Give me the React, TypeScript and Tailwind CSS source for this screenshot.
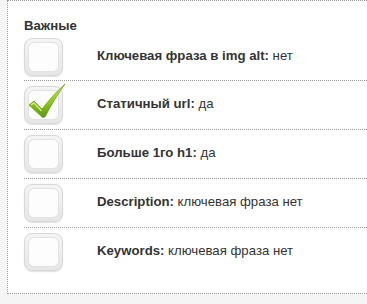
import React from "react";

const rows = [
  { label: "Ключевая фраза в img alt:", value: "нет", checked: false },
  { label: "Статичный url:", value: "да", checked: true },
  { label: "Больше 1го h1:", value: "да", checked: false },
  { label: "Description:", value: "ключевая фраза нет", checked: false },
  { label: "Keywords:", value: "ключевая фраза нет", checked: false },
];

function CheckBox({ checked }: { checked: boolean }) {
  return (
    <div className="relative h-[38px] w-[39px] shrink-0">
      <div className="h-full w-full rounded-[8px] border border-[#d8d8d8] bg-[linear-gradient(180deg,#f4f4f4,#e6e6e6)] p-[3px] shadow-[0_1px_1px_rgba(0,0,0,0.12)]">
        <div className="h-full w-full rounded-[6px] border border-[#e2e2e2] bg-[#fdfdfd]" />
      </div>
      {checked ? (
        <svg
          className="absolute left-0 top-[-4px]"
          width="44"
          height="40"
          viewBox="0 0 44 40"
        >
          <defs>
            <linearGradient id="chk" x1="0" y1="0" x2="0" y2="1">
              <stop offset="0" stopColor="#cde957" />
              <stop offset="0.5" stopColor="#94c824" />
              <stop offset="1" stopColor="#5e9612" />
            </linearGradient>
          </defs>
          <path
            d="M5 23 L10 19 L18 27 C25 18 32 10 41 2 C34 12 27 23 21 35 L18.5 35.5 Z"
            fill="url(#chk)"
            stroke="#6fa61c"
            strokeWidth="0.8"
            strokeLinejoin="round"
          />
          <path d="M7 23 L10 21 L17.5 29" fill="none" stroke="#e6f7a0" strokeWidth="1.2" opacity="0.85" />
        </svg>
      ) : null}
    </div>
  );
}

export default function App() {
  return (
    <div className="h-[304px] w-[367px] overflow-hidden bg-[#f5f5f5] pl-[7px] font-['Liberation_Sans',Arial,sans-serif] text-[#333]">
      <div className="h-[294px] border-b border-l border-t border-dotted border-[#999] bg-white pl-[16px] pt-[17px]">
        <div className="text-[13.2px] font-bold leading-[15px]">Важные</div>
        <div className="mt-[5px]">
          {rows.map((row, i) => (
            <div
              key={row.label}
              className={
                i === 0
                  ? "flex h-[42px] items-start"
                  : "flex h-[49px] items-start border-t border-dotted border-[#999] pt-[5px]"
              }
            >
              <CheckBox checked={row.checked} />
              <div className="ml-[34px] mt-[10px] text-[13.2px] leading-[15px]">
                <span className="font-bold">{row.label}</span> {row.value}
              </div>
            </div>
          ))}
        </div>
      </div>
    </div>
  );
}
